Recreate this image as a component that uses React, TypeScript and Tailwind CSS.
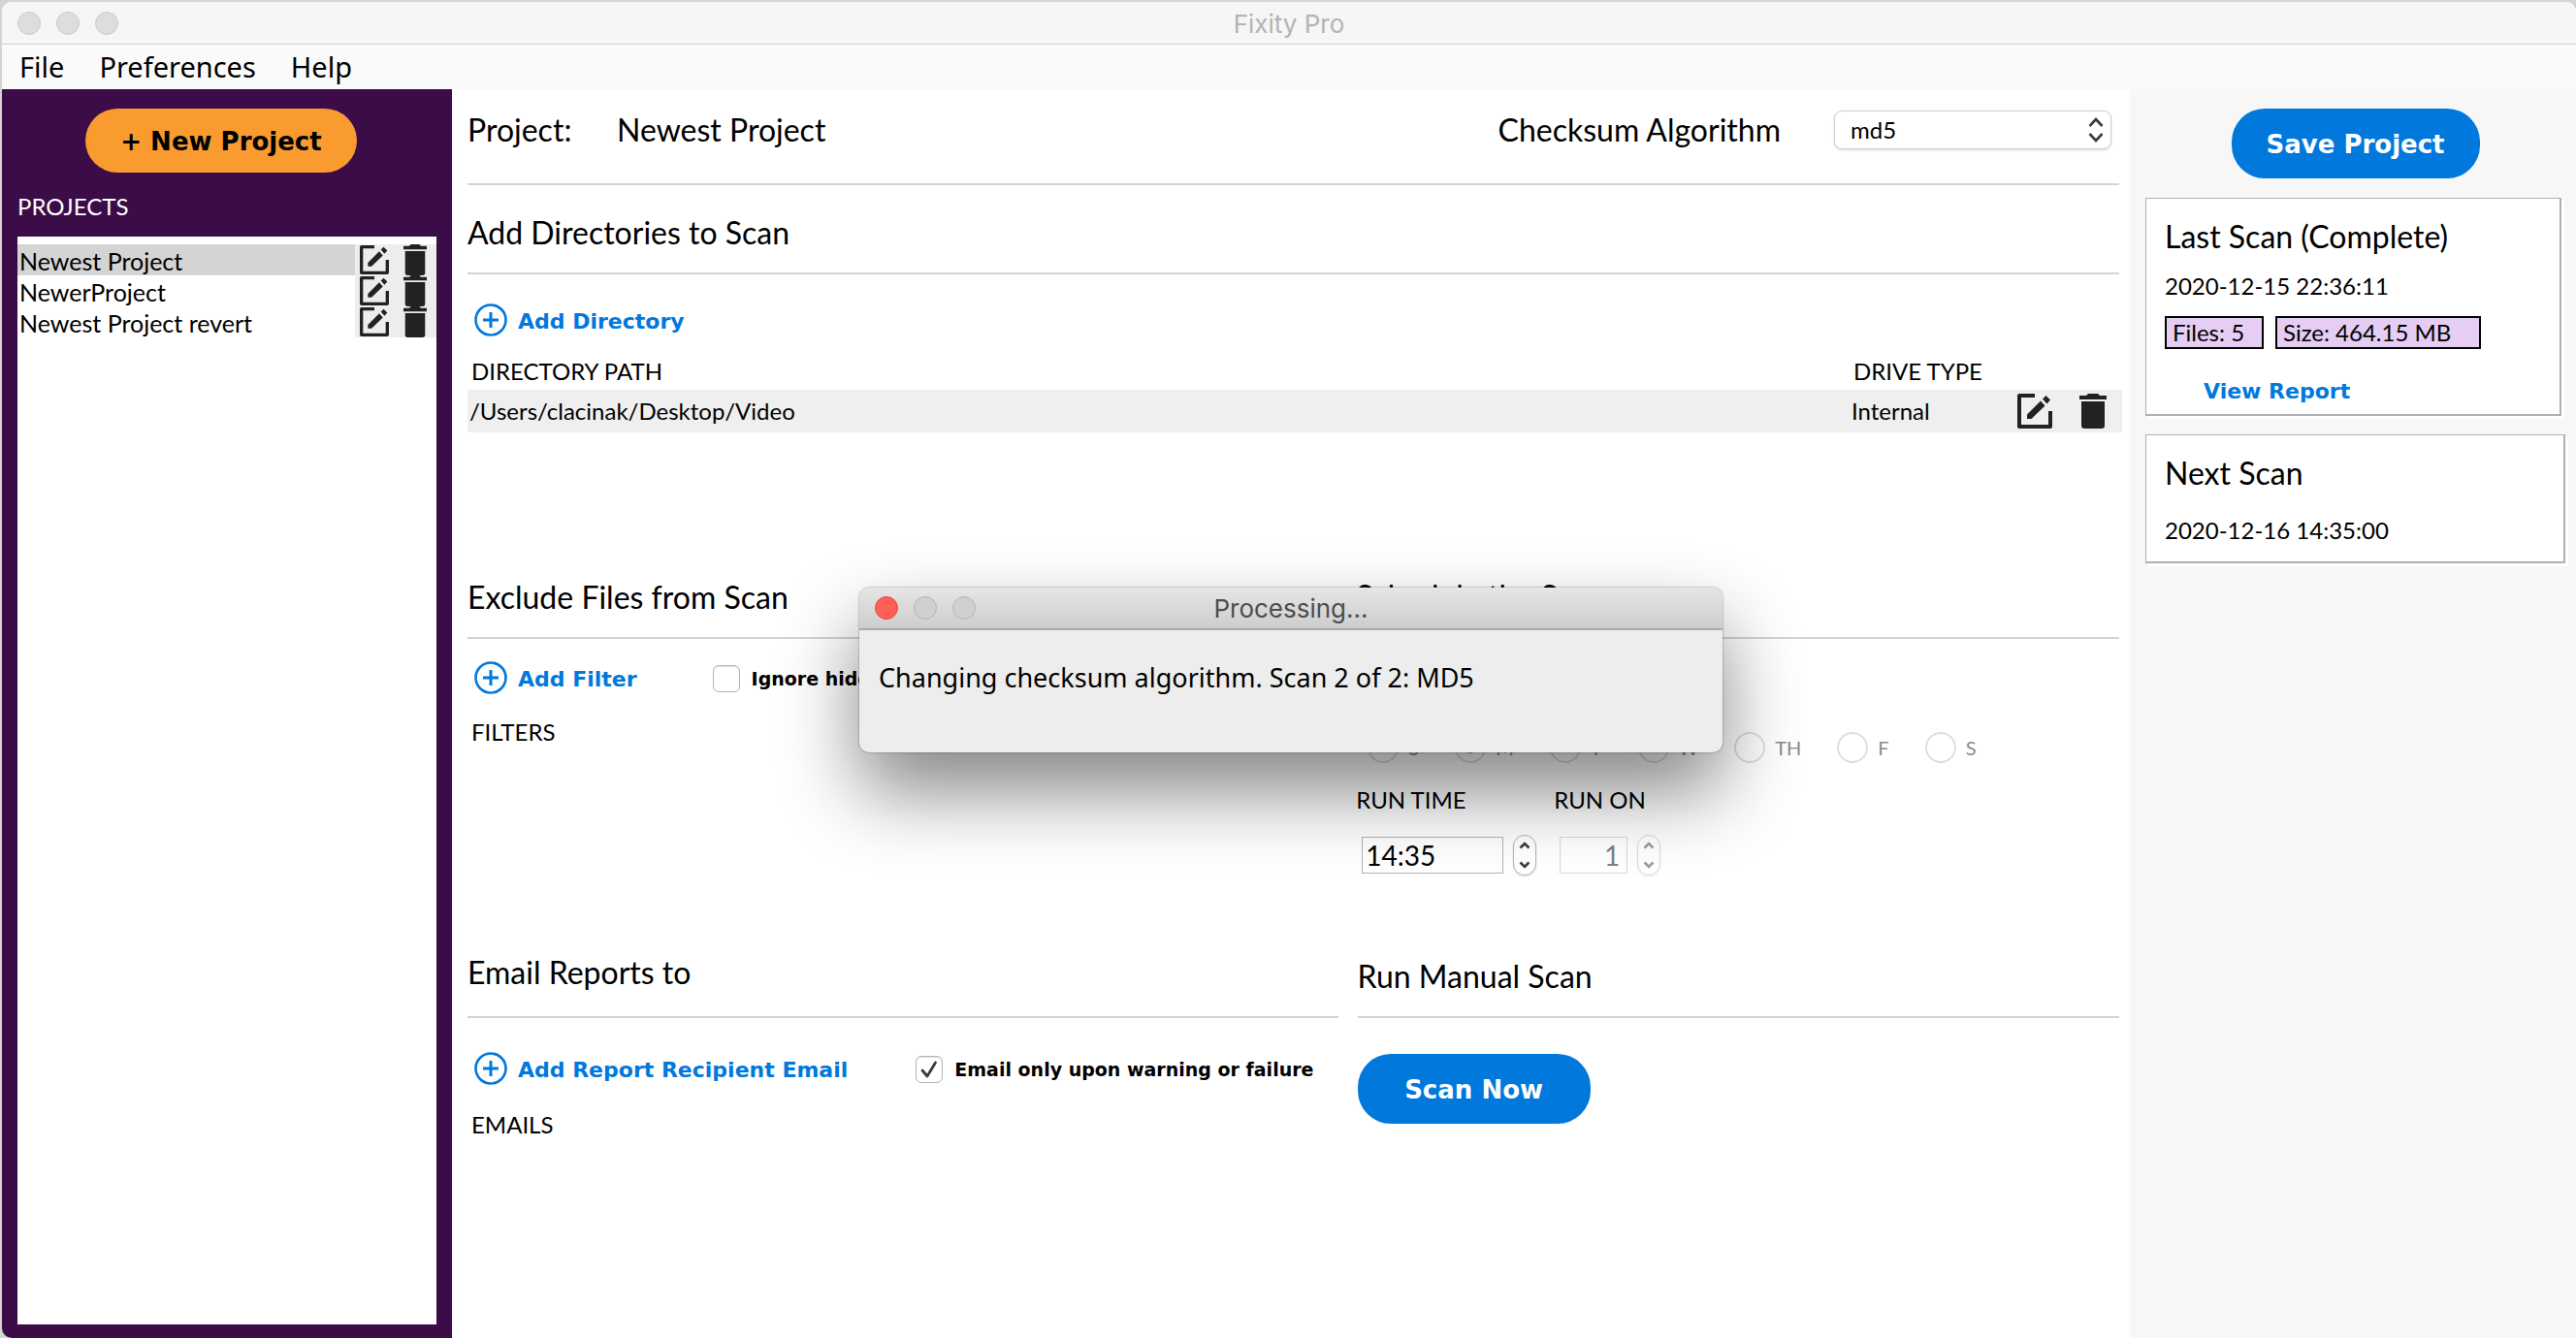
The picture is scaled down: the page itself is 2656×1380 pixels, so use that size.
import React, { useState } from 'react';

interface Project {
  id: number;
  name: string;
}

const projects: Project[] = [
  { id: 1, name: 'Newest Project' },
  { id: 2, name: 'NewerProject' },
  { id: 3, name: 'Newest Project revert' },
];

const directories = [{ path: '/Users/clacinak/Desktop/Video', driveType: 'Internal' }];

const weekDays = [
  { id: 'sun', label: 'S' },
  { id: 'mon', label: 'M' },
  { id: 'tue', label: 'T' },
  { id: 'wed', label: 'W' },
  { id: 'thu', label: 'TH' },
  { id: 'fri', label: 'F' },
  { id: 'sat', label: 'S' },
];

function EditIcon({ className }: { className: string }) {
  return (
    <svg viewBox="0 0 36 36" className={className} aria-hidden="true">
      <path d="M18 2H2V34H34V18" fill="none" stroke="#222" strokeWidth="4" strokeLinejoin="round" />
      <path d="M10 21.5V26H14.500L28.500 12.500L24 7.500Z" fill="#222" />
      <path d="M26 5.500L29.500 2L34 6.500L30.500 10.500Z" fill="#222" />
    </svg>
  );
}

function TrashIcon({ className }: { className: string }) {
  return (
    <svg viewBox="0 0 28 36" className={className} preserveAspectRatio="none" aria-hidden="true">
      <path d="M0 2H7L9 0H19L21 2H28V6H0Z" fill="#222" />
      <path d="M2 8H26V33Q26 36 23 36H5Q2 36 2 33Z" fill="#222" />
    </svg>
  );
}

function PlusCircleIcon() {
  return (
    <svg viewBox="0 0 36 36" className="h-9 w-9" aria-hidden="true">
      <circle cx="18" cy="18" r="15.500" fill="none" stroke="#0078dc" strokeWidth="2.600" />
      <path d="M18 10V26M10 18H26" stroke="#0078dc" strokeWidth="3" />
    </svg>
  );
}

function AddButton({ label }: { label: string }) {
  return (
    <button className="flex h-9 items-center gap-[10px] pl-[6px] text-[22px] leading-8 font-bold text-[#0078dc] font-['DejaVu_Sans',sans-serif]">
      <PlusCircleIcon />
      <span className="pt-1">{label}</span>
    </button>
  );
}

function CheckOption({ label, checked, onChange }: { label: string; checked: boolean; onChange: (value: boolean) => void }) {
  return (
    <label className="flex items-center gap-3 pt-[2px] text-[19px] leading-8 font-bold whitespace-nowrap font-['DejaVu_Sans',sans-serif]">
      <span className="grid place-items-center">
        <input
          type="checkbox"
          checked={checked}
          onChange={(e) => onChange(e.target.checked)}
          className="col-start-1 row-start-1 h-7 w-7 appearance-none rounded-md border border-[#b4b4b4] bg-white shadow-[inset_0_1px_1px_rgba(0,0,0,0.12)]"
        />
        {checked && (
          <svg viewBox="0 0 28 28" className="pointer-events-none col-start-1 row-start-1 h-7 w-7" aria-hidden="true">
            <path d="M7 15L12 21L20.500 7" fill="none" stroke="#3c3c3c" strokeWidth="2.800" strokeLinecap="round" strokeLinejoin="round" />
          </svg>
        )}
      </span>
      {label}
    </label>
  );
}

function Stepper({ name, disabled = false }: { name: string; disabled?: boolean }) {
  return (
    <div className={`flex h-[42px] w-6 flex-col overflow-hidden rounded-xl border border-[#b8b8b8] bg-white shadow-sm ${disabled ? 'opacity-50' : ''}`}>
      <button disabled={disabled} aria-label={`Increase ${name}`} className="flex flex-1 items-center justify-center">
        <svg viewBox="0 0 12 8" className="h-2 w-3" aria-hidden="true">
          <path d="M1.500 6.500L6 2L10.500 6.500" fill="none" stroke="#3c3c3c" strokeWidth="2.600" />
        </svg>
      </button>
      <button disabled={disabled} aria-label={`Decrease ${name}`} className="flex flex-1 items-center justify-center">
        <svg viewBox="0 0 12 8" className="h-2 w-3" aria-hidden="true">
          <path d="M1.500 1.500L6 6L10.500 1.500" fill="none" stroke="#3c3c3c" strokeWidth="2.600" />
        </svg>
      </button>
    </div>
  );
}

function Sidebar() {
  const [selected, setSelected] = useState(1);

  return (
    <nav className="flex w-[464px] shrink-0 flex-col bg-[#3b0c48] px-4 pt-5 pb-[14px]">
      <button className="ml-[70px] h-[66px] w-[280px] rounded-[33px] bg-[#f99b2e] pt-[2px] text-[26px] font-bold font-['DejaVu_Sans',sans-serif]">
        + New Project
      </button>
      <h2 className="mt-[19px] text-2xl leading-8 text-white">PROJECTS</h2>
      <ul className="mt-[15px] flex-1 bg-white pt-2">
        {projects.map((project) => (
          <li key={project.id} className="flex h-8">
            <button
              onClick={() => setSelected(project.id)}
              className={`flex-1 pt-px pl-[2px] text-left text-[25px] leading-8 ${selected === project.id ? 'bg-[#d4d4d4]' : 'bg-white'}`}
            >
              {project.name}
            </button>
            <div className="flex w-[84px] items-center gap-[15px] bg-[#ededed] pl-[5px]">
              <button aria-label={`Rename ${project.name}`}>
                <EditIcon className="block h-[30px] w-[30px]" />
              </button>
              <button aria-label={`Delete ${project.name}`}>
                <TrashIcon className="block h-8 w-6" />
              </button>
            </div>
          </li>
        ))}
      </ul>
    </nav>
  );
}

function ProjectForm() {
  const [ignoreHidden, setIgnoreHidden] = useState(false);
  const [warningOnly, setWarningOnly] = useState(true);
  const [algorithm, setAlgorithm] = useState('md5');
  const [runTime, setRunTime] = useState('14:35');

  return (
    <main className="flex-1 bg-white pr-2 pl-4">
      <header className="mr-[3px] flex items-center border-b-2 border-[#d3d3d3] pt-[22px] pb-[35px] text-[32px] leading-10">
        <span className="w-[154px]">Project:</span>
        <h1>Newest Project</h1>
        <label htmlFor="algorithm" className="mr-[55px] ml-auto">Checksum Algorithm</label>
        <div className="relative mr-2">
          <select
            id="algorithm"
            value={algorithm}
            onChange={(e) => setAlgorithm(e.target.value)}
            className="block h-10 w-[286px] appearance-none rounded-lg border border-[#cdcdcd] bg-white pl-4 text-2xl leading-8 shadow-sm"
          >
            <option value="md5">md5</option>
            <option value="sha256">sha256</option>
          </select>
          <svg viewBox="0 0 16 26" className="pointer-events-none absolute top-[7px] right-2 h-[26px] w-4" aria-hidden="true">
            <path d="M1.500 9L8 2L14.500 9M1.500 17L8 24L14.500 17" fill="none" stroke="#3c3c3c" strokeWidth="2.600" />
          </svg>
        </div>
      </header>

      <section>
        <h2 className="mr-[3px] border-b-2 border-[#d3d3d3] pt-[29px] pb-[21px] text-[32px] leading-10">Add Directories to Scan</h2>
        <div className="pt-[29px]">
          <AddButton label="Add Directory" />
        </div>
        <div className="mt-4 min-h-[203px]">
          <table className="w-full text-left text-2xl leading-8">
            <thead>
              <tr className="h-[38px]">
                <th className="pl-1 font-normal">DIRECTORY PATH</th>
                <th className="w-[161px] pl-[2px] font-normal">DRIVE TYPE</th>
                <th className="w-[118px]" aria-label="Actions" />
              </tr>
            </thead>
            <tbody>
              {directories.map((directory) => (
                <tr key={directory.path} className="h-11 bg-[#efefef]">
                  <td className="pl-[2px]">{directory.path}</td>
                  <td>{directory.driveType}</td>
                  <td>
                    <div className="flex items-center gap-7 pl-[10px]">
                      <button aria-label="Edit directory"><EditIcon className="block h-9 w-9" /></button>
                      <button aria-label="Remove directory"><TrashIcon className="block h-9 w-7" /></button>
                    </div>
                  </td>
                </tr>
              ))}
            </tbody>
          </table>
        </div>
      </section>

      <div className="mr-[3px] grid grid-cols-[8fr_7fr]">
        <section>
          <h2 className="border-b-2 border-[#d3d3d3] pt-[29px] pb-[21px] text-[32px] leading-10">Exclude Files from Scan</h2>
          <div className="flex items-center gap-[78px] pt-[22px]">
            <AddButton label="Add Filter" />
            <CheckOption label="Ignore hidden files" checked={ignoreHidden} onChange={setIgnoreHidden} />
          </div>
          <h3 className="mt-[22px] pl-1 text-2xl leading-8">FILTERS</h3>
        </section>

        <section>
          <h2 className="border-b-2 border-[#d3d3d3] pt-[28px] pb-[22px] pl-2 text-[32px] leading-10">Schedule the Scan</h2>
          <fieldset disabled className="mt-[96px] flex gap-[37px] pl-5">
            {weekDays.map((day) => (
              <label key={day.id} className="flex items-center gap-[10px] text-[20px] leading-8 text-[#8a8a8a]">
                <span className="grid place-items-center">
                  <input
                    type="radio"
                    name="weekday"
                    defaultChecked={day.id === 'mon'}
                    className="peer col-start-1 row-start-1 h-8 w-8 appearance-none rounded-full border-2 border-[#dedede] bg-white"
                  />
                  <span className="col-start-1 row-start-1 hidden h-3 w-3 rounded-full bg-[#8a8a8a] peer-checked:block" />
                </span>
                {day.label}
              </label>
            ))}
          </fieldset>
          <div className="mt-[22px] flex pl-2">
            <div className="w-[204px]">
              <label htmlFor="runTime" className="text-2xl leading-8">RUN TIME</label>
              <div className="mt-5 flex items-center gap-[10px] pl-[6px]">
                <input
                  id="runTime"
                  value={runTime}
                  onChange={(e) => setRunTime(e.target.value)}
                  className="h-[38px] w-[146px] border border-[#b4b4b4] bg-white pl-[3px] text-[28px] leading-8"
                />
                <Stepper name="run time" />
              </div>
            </div>
            <div>
              <label htmlFor="runOn" className="text-2xl leading-8">RUN ON</label>
              <div className="mt-5 flex items-center gap-[10px] pl-[6px]">
                <input
                  id="runOn"
                  defaultValue="1"
                  disabled
                  className="h-[38px] w-[70px] border border-[#d8d8d8] bg-white pr-[7px] text-right text-[28px] leading-8 text-[#808080]"
                />
                <Stepper name="run on" disabled />
              </div>
            </div>
          </div>
        </section>
      </div>

      <div className="mt-[50px] mr-[3px] grid grid-cols-[8fr_7fr] gap-x-5">
        <section>
          <h2 className="border-b-2 border-[#d3d3d3] pt-[30px] pb-[25px] text-[32px] leading-10">Email Reports to</h2>
          <div className="flex items-center gap-[70px] pt-[34px]">
            <AddButton label="Add Report Recipient Email" />
            <CheckOption label="Email only upon warning or failure" checked={warningOnly} onChange={setWarningOnly} />
          </div>
          <h3 className="mt-6 pl-1 text-2xl leading-8">EMAILS</h3>
        </section>

        <section>
          <h2 className="border-b-2 border-[#d3d3d3] pt-[34px] pb-[21px] text-[32px] leading-10">Run Manual Scan</h2>
          <button className="mt-[37px] h-[72px] w-60 rounded-[34px] bg-[#0078dc] pt-[2px] text-[26px] font-bold text-white font-['DejaVu_Sans',sans-serif]">
            Scan Now
          </button>
        </section>
      </div>
    </main>
  );
}

function ScanSummary() {
  return (
    <aside className="flex w-[460px] shrink-0 flex-col bg-[#f7f7f7] pt-5 pr-[11px] pl-4">
      <button className="h-[72px] w-64 self-center rounded-[34px] bg-[#0078dc] pt-[2px] text-[26px] font-bold text-white font-['DejaVu_Sans',sans-serif]">
        Save Project
      </button>
      <section className="mt-5 mr-1 border border-r-2 border-b-2 border-[#b0b0b0] bg-white px-[19px] pt-[19px] pb-[7px] shadow-[3px_3px_0_#fff]">
        <h2 className="text-[32px] leading-10">Last Scan (Complete)</h2>
        <p className="mt-[15px] text-2xl leading-8">2020-12-15 22:36:11</p>
        <div className="mt-[15px] flex gap-3 text-2xl leading-[30px]">
          <span className="w-[102px] border-2 border-black bg-[#e5cdf3] pl-[6px]">Files: 5</span>
          <span className="w-[212px] border-2 border-black bg-[#e5cdf3] pl-[6px]">Size: 464.15 MB</span>
        </div>
        <button className="mt-7 ml-10 block text-[22px] leading-8 font-bold text-[#0078dc] font-['DejaVu_Sans',sans-serif]">
          View Report
        </button>
      </section>
      <section className="mt-[19px] border border-r-2 border-b-2 border-[#b0b0b0] bg-white px-[19px] pt-[19px] pb-4 shadow-[3px_3px_0_#fff]">
        <h2 className="text-[32px] leading-10">Next Scan</h2>
        <p className="mt-[23px] text-2xl leading-8">2020-12-16 14:35:00</p>
      </section>
    </aside>
  );
}

function ProcessingDialog() {
  return (
    <div
      role="dialog"
      aria-label="Processing"
      className="absolute top-[606px] left-[886px] w-[890px] overflow-hidden rounded-[10px] bg-[#ededed] shadow-[0_0_2px_rgba(0,0,0,0.5),0_40px_80px_rgba(0,0,0,0.48)]"
    >
      <div className="grid h-[44px] grid-cols-[1fr_auto_1fr] items-center border-b-2 border-[#ababab] bg-linear-to-b from-[#e6e6e6] to-[#cdcdcd] px-4">
        <div className="flex gap-4">
          <button aria-label="Close" className="h-6 w-6 rounded-full border border-[#e2463f] bg-[#ff5f57]" />
          <button aria-label="Minimize" disabled className="h-6 w-6 rounded-full border border-[#b4b4b4] bg-[#d0d0d0]" />
          <button aria-label="Zoom" disabled className="h-6 w-6 rounded-full border border-[#b4b4b4] bg-[#d0d0d0]" />
        </div>
        <span className="pt-[2px] text-[26px] leading-8 text-[#4d4d4d] font-['Inter',sans-serif]">Processing...</span>
      </div>
      <p className="px-5 pt-[33px] pb-[61px] text-[27px] leading-8 font-['Noto_Sans',sans-serif]">
        Changing checksum algorithm. Scan 2 of 2: MD5
      </p>
    </div>
  );
}

export default function App() {
  return (
    <div className="relative flex min-h-screen flex-col overflow-hidden bg-[#d4d4d4] pt-[2px] pl-[2px] text-black font-['Lato',sans-serif]">
      <div className="flex flex-1 flex-col overflow-hidden rounded-[10px] rounded-br-none bg-white">
        <div className="grid h-11 grid-cols-[1fr_auto_1fr] items-center border-b border-[#cfcfcf] bg-[#f6f6f6] px-4">
          <div className="flex gap-4">
            <button aria-label="Close window" className="h-6 w-6 rounded-full border border-[#cacaca] bg-[#dddddd]" />
            <button aria-label="Minimize window" className="h-6 w-6 rounded-full border border-[#cacaca] bg-[#dddddd]" />
            <button aria-label="Zoom window" className="h-6 w-6 rounded-full border border-[#cacaca] bg-[#dddddd]" />
          </div>
          <span className="pt-[2px] text-[26px] leading-8 text-[#b4b4b4] font-['Inter',sans-serif]">Fixity Pro</span>
        </div>
        <div className="flex h-[46px] items-center gap-9 bg-[#fafafa] px-[18px] text-[29px] leading-10 font-['Noto_Sans',sans-serif]">
          <button>File</button>
          <button>Preferences</button>
          <button>Help</button>
        </div>
        <div className="flex flex-1">
          <Sidebar />
          <ProjectForm />
          <ScanSummary />
        </div>
      </div>
      <ProcessingDialog />
    </div>
  );
}
